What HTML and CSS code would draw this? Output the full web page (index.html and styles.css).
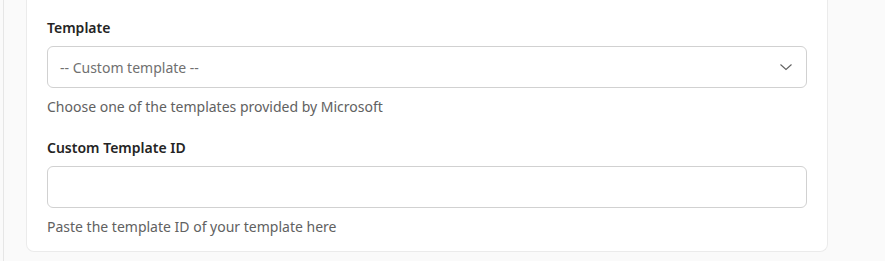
FILE: index.html
```html
<!DOCTYPE html>
<html lang="en">
<head>
    <meta charset="UTF-8">
    <meta name="viewport" content="width=device-width, initial-scale=1.0">
    <title>Template settings</title>
    <link rel="stylesheet" href="styles.css">
</head>
<body>
    <div class="page">
        <div class="card">
            <div class="field">
                <label class="field-label" for="template">Template</label>
                <div class="select">
                    <span class="select-value">-- Custom template --</span>
                    <svg class="chevron" width="16" height="16" viewBox="0 0 16 16">
                        <path d="M2.5 5.5 L8 10.5 L13.5 5.5" fill="none" stroke="#616161" stroke-width="1.1"/>
                    </svg>
                </div>
                <div class="field-hint">Choose one of the templates provided by Microsoft</div>
            </div>
            <div class="field">
                <label class="field-label" for="template-id">Custom Template ID</label>
                <input type="text" id="template-id" class="text-input">
                <div class="field-hint">Paste the template ID of your template here</div>
            </div>
        </div>
    </div>
</body>
</html>
```

FILE: styles.css
```css
body {
    font-family: 'Segoe UI', 'Noto Sans', sans-serif;
    margin: 0;
    padding: 0;
    background-color: #fafafa;
    color: #242424;
}

.page {
    margin-left: 3px;
    border-left: 1px solid #e6e6e6;
    height: 261px;
    padding-left: 22px;
    width: 802px;
}

.card {
    background-color: white;
    border: 1px solid #ebebeb;
    border-top: none;
    border-radius: 0 0 8px 8px;
    padding: 18px 20px 14px 20px;
}

.field + .field {
    margin-top: 21px;
}

.field-label {
    display: block;
    font-size: 14px;
    font-weight: 600;
    line-height: 20px;
    margin-bottom: 8px;
}

.select, .text-input {
    box-sizing: border-box;
    width: 100%;
    height: 42px;
    border: 1px solid #d1d1d1;
    border-radius: 6px;
    background-color: white;
}

.select {
    display: flex;
    align-items: center;
    justify-content: space-between;
    padding: 0 12px 0 12px;
}

.select-value {
    font-size: 14px;
    color: #707070;
}

.text-input {
    display: block;
    font-family: inherit;
    font-size: 14px;
    padding: 0 12px;
    outline: none;
}

.field-hint {
    font-size: 14px;
    line-height: 20px;
    color: #616161;
    margin-top: 9px;
}
```
